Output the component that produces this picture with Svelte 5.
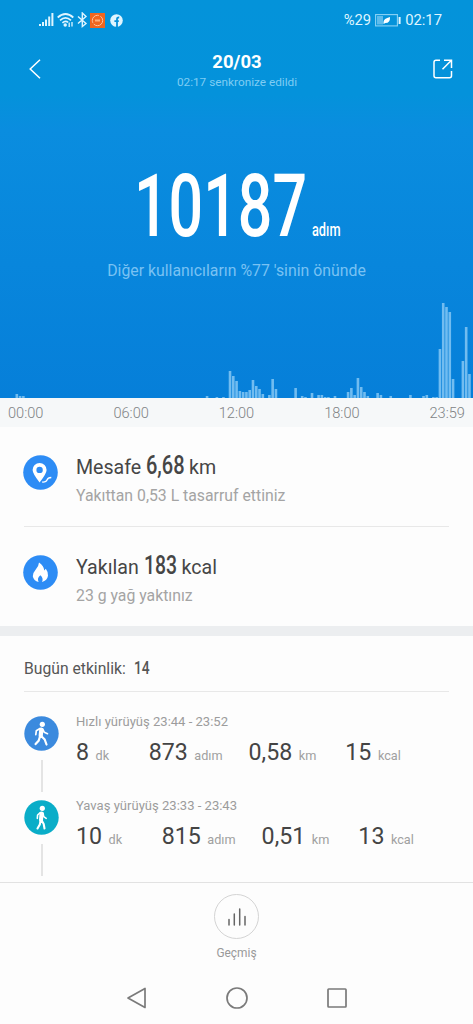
<script lang="ts">
	const PITCH = 3.28;
	const AXIS = ['00:00', '06:00', '12:00', '18:00', '23:59'];

	// [ten-minute slot, bar height]
	const steps = [
		[4, 4], [5, 2], [6, 2], [62, 2], [65, 1], [67, 1],
		[69, 27], [70, 22], [71, 17], [72, 7], [73, 6], [74, 6], [75, 8], [76, 18], [77, 12], [78, 9], [79, 4],
		[81, 3], [82, 19], [83, 9], [89, 10], [91, 2], [92, 1], [94, 5], [96, 3], [97, 3], [98, 1],
		[99, 1], [101, 2], [105, 6], [106, 10], [107, 3], [108, 20], [109, 11], [110, 6], [111, 2],
		[114, 5], [115, 3], [118, 2], [124, 3], [128, 2], [129, 3], [131, 1], [132, 1],
		[133, 49], [134, 95], [135, 91], [136, 86], [137, 19], [140, 37], [141, 71], [142, 24]
	];

	const activities = [
		{
			kind: 'fast',
			title: 'Hızlı yürüyüş 23:44 - 23:52',
			values: [['8', 'dk'], ['873', 'adım'], ['0,58', 'km'], ['15', 'kcal']]
		},
		{
			kind: 'slow',
			title: 'Yavaş yürüyüş 23:33 - 23:43',
			values: [['10', 'dk'], ['815', 'adım'], ['0,51', 'km'], ['13', 'kcal']]
		}
	];
</script>

{#snippet narrow(text: string, width: number, size: number, squeeze: number)}
	<svg class="narrow" {width} height={size * 0.72}>
		<text x="0" y={size * 0.72} font-size={size} transform="scale({squeeze} 1)">{text}</text>
	</svg>
{/snippet}

<div class="screen">
	<section class="hero">
		<div class="status">
			<div class="status-icons">
				<svg width="16" height="16" viewBox="0 0 16 16" stroke="currentColor" stroke-width="2">
					<path d="M2 14v-2M5 14v-4M8 14V7.500M11.200 14V4.500M14.400 14V1" />
				</svg>
				<svg class="wifi" width="17" height="16" viewBox="0 0 17 16" fill="none" stroke="currentColor" stroke-width="1.7">
					<path d="M.7 5.500Q8.500-1.500 16.300 5.500M3 8.300q5.500-5 11 0M5.400 10.800q3.100-2.700 5.700-.4" />
					<circle cx="8.200" cy="13" r=".9" fill="currentColor" />
					<path d="M12.200 15v-4.500M15 10v4.500" stroke-width="1.300" />
				</svg>
				<svg class="bt" width="11" height="16" viewBox="0 0 11 16" fill="none" stroke="currentColor" stroke-width="1.400">
					<path d="M1 4.500l8 7-3.700 3V1L9 4.500l-8 7" />
				</svg>
				<svg class="app" width="15" height="15" viewBox="0 0 15 15" fill="none">
					<rect width="15" height="15" fill="#f0661e" />
					<circle cx="7.500" cy="7.500" r="5.200" stroke="#ffc39b" stroke-dasharray="12 1.500" />
					<path d="M5 7.500h5" stroke="#ffb07c" stroke-width="2" />
				</svg>
				<svg width="13" height="13" viewBox="0 0 13 13">
					<circle cx="6.500" cy="6.500" r="6.300" fill="currentColor" />
					<path d="M7 13V5q0-1.700 2.200-1.500M4.400 7.100h4.400" fill="none" stroke="#0790d9" stroke-width="1.800" />
				</svg>
			</div>
			<div class="status-right">
				<span>%29</span>
				<svg width="26" height="13" viewBox="0 0 26 13">
					<rect x=".6" y=".6" width="21.800" height="11.300" fill="none" stroke="#8bd3f5" stroke-width="1.100" />
					<rect x="2" y="2" width="6" height="8.500" fill="#5ebcec" />
					<path d="M8.500 10V8q0-3.500 6.500-5 .3 6-4.600 6z" fill="#fff" />
					<path d="M24.600 3v7" stroke="#e4f6ff" stroke-width="2" />
				</svg>
				<span>02:17</span>
			</div>
		</div>

		<header>
			<svg class="back" width="12" height="20" viewBox="0 0 12 20" fill="none" stroke="currentColor" stroke-width="1.500">
				<path d="M11 .7L1.200 10l9.800 9.300" />
			</svg>
			<div class="heading">
				<h1>20/03</h1>
				<p>02:17 senkronize edildi</p>
			</div>
			<svg class="share" width="20" height="20" viewBox="0 0 20 20" fill="none" stroke="currentColor" stroke-width="1.500">
				<path d="M7 1.200H3q-2 0-2 2v13.600q0 2 2 2h13.500q2 0 2-2V12M9.500 10.200l8.700-8.700M11 1.200h7.500V9" />
			</svg>
		</header>

		<div class="total">
			{@render narrow('10187', 171, 87.5, 0.696)}
			{@render narrow('adım', 28, 18.5, 0.69)}
		</div>
		<p class="rank">Diğer kullanıcıların %77 'sinin önünde</p>

		<svg class="chart" width="473" height="96">
			{#each steps as [slot, height]}
				<rect x={slot * PITCH + 2.4} y={96 - height} width="2.600" {height} />
			{/each}
		</svg>
	</section>

	<div class="axis">
		{#each AXIS as label}
			<span>{label}</span>
		{/each}
	</div>

	<section class="stats">
		<div class="stat">
			<svg class="badge" width="35" height="35" viewBox="0 0 35 35">
				<circle cx="17.500" cy="17.500" r="17.300" fill="#2d8cf5" />
				<path fill="#fff" fill-rule="evenodd" d="M16.600 8a7 7 0 0 1 7 7q0 3.500-7 12.500-7-9-7-12.500a7 7 0 0 1 7-7zm0 3.700a3.200 3.200 0 1 0 0 6.400 3.200 3.200 0 0 0 0-6.400z" />
				<path d="M19.200 27q4 .3 4.800-2t4.300-2.500" fill="none" stroke="#fff" stroke-width="1.300" />
			</svg>
			<div>
				<p class="main">Mesafe {@render narrow('6,68', 38, 26, 0.77)} km</p>
				<p class="sub">Yakıttan 0,53 L tasarruf ettiniz</p>
			</div>
		</div>
		<div class="stat">
			<svg class="badge" width="35" height="35" viewBox="0 0 35 35">
				<circle cx="17.500" cy="17.500" r="17.300" fill="#2d8cf5" />
				<path fill="#fff" d="M16 7.500q5 3.500 5.300 8l1.500-1.700q2.700 3.500 2.200 7-.8 5-6 6.200 1.800-3.600-1.600-6.700-3.700 2.800-1.800 6.700-5-1-5.800-5.700-.3-3 2.600-6.300Q15.800 11.500 16 7.500z" />
			</svg>
			<div>
				<p class="main">Yakılan {@render narrow('183', 33, 26, 0.745)} kcal</p>
				<p class="sub">23 g yağ yaktınız</p>
			</div>
		</div>
	</section>

	<section class="log">
		<h2>Bugün etkinlik: <span>{@render narrow('14', 16, 17.5, 0.79)}</span></h2>
		{#each activities as activity}
			<div class="activity">
				<div class="rail">
					<svg width="35" height="35" viewBox="0 0 35 35" fill="none" stroke="#fff" stroke-linecap="round" stroke-linejoin="round">
						{#if activity.kind === 'fast'}
							<circle cx="17.500" cy="17.500" r="17.200" fill="#3b8ade" stroke="none" />
							<circle cx="18.300" cy="8.300" r="2.600" fill="#fff" stroke="none" />
							<path d="M17.300 13.500l-.6 6.500" stroke-width="4.200" />
							<path d="M16 12.500l-3.700 2.300-.5 3.800M18.700 13l1.600 3.300 3.200 1.400" stroke-width="1.700" />
							<path d="M16 20.500l-1.400 4.300-3 3.300M17.700 20.500l3 3 1.800 5" stroke-width="2.200" />
						{:else}
							<circle cx="17.500" cy="17.500" r="17.200" fill="#0aadc8" stroke="none" />
							<circle cx="18.300" cy="8.300" r="2.600" fill="#fff" stroke="none" />
							<path d="M17.500 13.500l-.5 6.500" stroke-width="4" />
							<path d="M16.300 12.500l-2.700 2.500-.3 3.400M19 13l.7 3.600 2.500 1.800" stroke-width="1.600" />
							<path d="M16.600 20.500l-.8 4-2.300 4M17.700 20.500l2 3.500.8 4.500" stroke-width="2.100" />
						{/if}
					</svg>
					<i></i>
				</div>
				<div>
					<h3>{activity.title}</h3>
					<div class="values">
						{#each activity.values as [amount, unit]}
							<span class="value"><b>{amount}</b><small>{unit}</small></span>
						{/each}
					</div>
				</div>
			</div>
		{/each}
	</section>

	<footer>
		<div class="history">
			<svg width="20" height="20" viewBox="0 0 20 20" stroke="#666" stroke-width="1.500" stroke-linecap="round">
				<path d="M2 18v-5.500M7.300 18V7M12.700 18V2M18 18v-8.500" />
			</svg>
		</div>
		<span>Geçmiş</span>
	</footer>

	<nav>
		<svg width="22" height="22" viewBox="0 0 22 22"><path d="M19 1.500v19L2 11z" /></svg>
		<svg width="22" height="22" viewBox="0 0 22 22"><circle cx="11" cy="11" r="10" /></svg>
		<svg width="22" height="22" viewBox="0 0 22 22"><rect x="2" y="2" width="18" height="18" rx=".7" /></svg>
	</nav>
</div>

<style>
	:global(body) {
		margin: 0;
		background: #fdfdfd;
	}

	.screen {
		width: 473px;
		height: 1024px;
		overflow: hidden;
		display: flex;
		flex-direction: column;
		background: #fdfdfd;
		font-family: Roboto, 'Noto Sans', sans-serif;
	}

	h1, h2, h3, p {
		margin: 0;
		font-weight: 400;
	}

	svg {
		display: block;
		flex: none;
	}

	.narrow {
		display: inline-block;
		overflow: visible;
		fill: currentColor;
		font-weight: 500;
	}

	.hero {
		height: 398px;
		display: flex;
		flex-direction: column;
		color: #fff;
		background: linear-gradient(#0493da 0, #0492db 95px, #0a8ddf 130px, #067fd9 398px);
	}

	.status {
		height: 40px;
		padding: 0 31px 0 38px;
		display: flex;
		justify-content: space-between;
		align-items: center;
		color: #dff5ff;
	}

	.status-icons, .status-right {
		display: flex;
		align-items: center;
	}

	.wifi {
		margin-left: 3px;
	}

	.bt {
		margin-left: 3px;
	}

	.app {
		margin: 0 5px 0 2px;
	}

	.status-right {
		gap: 4px;
		font-size: 14.8px;
		line-height: 20px;
	}

	header {
		height: 58px;
		padding: 0 20px 0 29px;
		display: flex;
		justify-content: space-between;
	}

	.back, .share {
		margin-top: 19px;
	}

	.heading {
		text-align: center;
		padding-top: 10px;
	}

	h1 {
		font-size: 18.5px;
		font-weight: 700;
		line-height: 24px;
	}

	.heading p {
		font-size: 11.8px;
		line-height: 16px;
		color: #7fcdf3;
	}

	.total {
		height: 138px;
		padding-left: 134px;
		display: flex;
		align-items: flex-end;
		gap: 7px;
	}

	.rank {
		margin-top: 23px;
		font-size: 15.85px;
		line-height: 24px;
		text-align: center;
		color: #79c2f3;
	}

	.chart {
		margin-top: auto;
		fill: #71bcf0;
	}

	.axis {
		height: 29px;
		box-sizing: border-box;
		padding: 0 8px;
		display: flex;
		justify-content: space-between;
		background: #f6f8f9;
		color: #808385;
		font-size: 14.6px;
		font-weight: 300;
		line-height: 31px;
	}

	.stats {
		height: 199px;
		padding: 0 24px;
	}

	.stat {
		height: 99px;
		display: flex;
		gap: 18px;
		border-bottom: 1px solid #e8e8e8;
	}

	.stat:last-child {
		border-bottom: 0;
	}

	.badge {
		margin: 28px 0 0 -1px;
	}

	.main {
		margin-top: 26px;
		height: 30px;
		font-size: 19.6px;
		line-height: 30px;
		color: #464646;
		white-space: nowrap;
	}

	.sub {
		margin-top: 3px;
		font-size: 15.8px;
		line-height: 20px;
		color: #a4a4a4;
	}

	.log {
		height: 246px;
		border-top: 10px solid #eceef0;
		padding: 0 24px;
	}

	h2 {
		height: 55px;
		border-bottom: 1px solid #e8e8e8;
		font-size: 15.7px;
		line-height: 65px;
		color: #565656;
	}

	h2 span {
		margin-left: 4px;
	}

	.activity {
		height: 84px;
		display: flex;
		gap: 17px;
	}

	.rail {
		width: 35px;
		padding-top: 24px;
		display: flex;
		flex-direction: column;
		align-items: center;
	}

	.rail i {
		width: 2px;
		height: 32px;
		margin-top: 9px;
		flex: none;
		background: #e4e4e4;
	}

	h3 {
		margin-top: 21px;
		font-size: 13.05px;
		line-height: 18px;
		color: #9c9c9c;
	}

	.values {
		display: flex;
		margin-top: 6px;
		line-height: 30px;
	}

	.value {
		display: flex;
		align-items: baseline;
		gap: 6.5px;
		margin-right: 39.5px;
	}

	.value:nth-child(2) {
		margin-right: 26px;
	}

	.value:nth-child(3) {
		margin-right: 29px;
	}

	.value b {
		font-size: 23.2px;
		font-weight: 400;
		color: #444;
	}

	.value small {
		font-size: 12.7px;
		color: #a0a0a0;
	}

	footer {
		height: 88px;
		border-top: 1px solid #e2e2e2;
		display: flex;
		flex-direction: column;
		align-items: center;
		font-size: 11.9px;
		line-height: 18px;
		color: #999;
	}

	.history {
		width: 43px;
		height: 43px;
		margin: 11px 0 5px;
		display: grid;
		place-items: center;
		border: 1px solid #d4d4d4;
		border-radius: 50%;
	}

	nav {
		height: 53px;
		display: flex;
		justify-content: center;
		align-items: center;
		gap: 78px;
		fill: none;
		stroke: #7a7a7a;
		stroke-width: 1.7;
		stroke-linejoin: round;
	}
</style>
